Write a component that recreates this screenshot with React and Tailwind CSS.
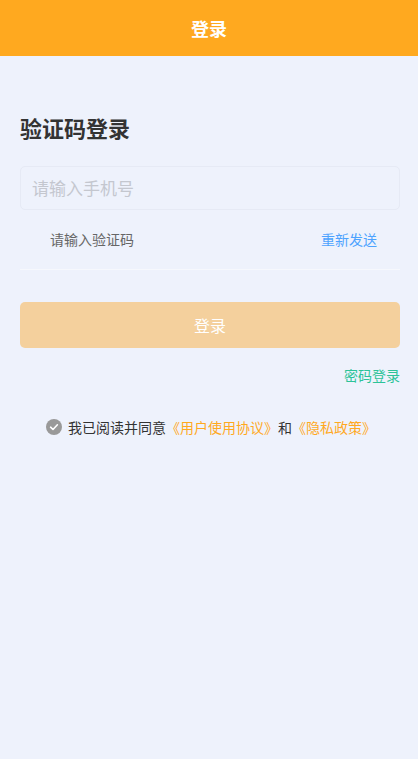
import React from "react";

export default function App() {
  return (
    <div
      className="w-[418px] h-[759px] bg-[#eef2fc] flex flex-col"
      style={{ fontFamily: '"Noto Sans CJK SC", "Noto Sans", sans-serif' }}
    >
      <div className="h-[56px] bg-[#ffa91f] flex items-center justify-center text-white text-[18px] font-bold">
        登录
      </div>
      <div className="pl-[20px] pr-[18px] flex flex-col">
        <div className="mt-[55px] text-[22px] font-bold text-[#333] leading-[32px]">验证码登录</div>
        <div className="mt-[23px] h-[44px] rounded-[5px] border border-[#e6eaf5] bg-[#eef2fc] flex items-center px-[11px] text-[17px] text-[#c4c7cf]">
          请输入手机号
        </div>
        <div className="h-[60px] flex items-center justify-between border-b border-[#f6f8fd] pl-[30px] pr-[23px]">
          <span className="text-[14px] text-[#666]">请输入验证码</span>
          <span className="text-[14px] text-[#4da3ff]">重新发送</span>
        </div>
        <div className="mt-[32px] h-[46px] rounded-[5px] bg-[#f4d09d] flex items-center justify-center text-white text-[16px]">
          登录
        </div>
        <div className="mt-[17px] flex justify-end text-[14px] text-[#2cc398] leading-[20px]">密码登录</div>
        <div className="mt-[32px] flex items-center justify-center text-[14px] leading-[20px] pl-[2px]">
          <svg width="16" height="16" viewBox="0 0 16 16" className="mr-[6px]">
            <circle cx="8" cy="8" r="8" fill="#999" />
            <path d="M4.6 8.2 L7 10.5 L11.4 5.8" stroke="#fff" strokeWidth="1.6" fill="none" strokeLinecap="round" strokeLinejoin="round" />
          </svg>
          <span className="text-[#333]">我已阅读并同意</span>
          <span className="text-[#ffa91f]">《用户使用协议》</span>
          <span className="text-[#333]">和</span>
          <span className="text-[#ffa91f]">《隐私政策》</span>
        </div>
      </div>
    </div>
  );
}
